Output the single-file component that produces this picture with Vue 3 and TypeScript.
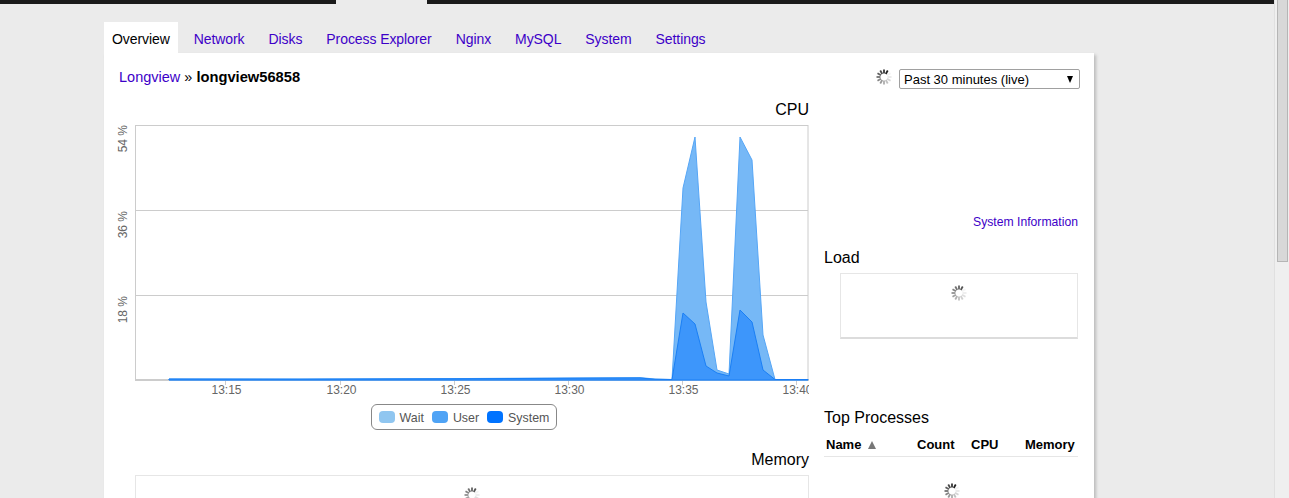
<script setup lang="ts">
const tabs = ['Overview', 'Network', 'Disks', 'Process Explorer', 'Nginx', 'MySQL', 'System', 'Settings'];

const ticks = [
  { x: 225, label: '13:15' },
  { x: 340, label: '13:20' },
  { x: 454, label: '13:25' },
  { x: 568, label: '13:30' },
  { x: 682, label: '13:35' },
  { x: 796, label: '13:40' },
];

const yLabels = [
  { y: 125, label: '54 %' },
  { y: 211, label: '36 %' },
  { y: 296, label: '18 %' },
];

const waitArea =
  '169,379 300,379 450,378.6 640,377.6 655,379 672,379.5 683,188 695,137 706,302 717,370 729,374 740,137 752,160 763,335 775,379.5 808,379.5 808,380 169,380';
const userArea =
  '169,379 300,379.2 450,378.8 640,378 655,379.3 672,379.5 683,313 695,324 706,366 717,373 729,376 740,310 752,322 763,370 775,379.5 808,379.5 808,380 169,380';

const legend = [
  { name: 'Wait', color: '#90c6f0' },
  { name: 'User', color: '#4fa3f5' },
  { name: 'System', color: '#0073ff' },
];

// twelve spokes, darkest at the top right, fading anticlockwise round to the right
const spokes = Array.from({ length: 12 }, (_, i) => ({
  angle: 30 - i * 30,
  opacity: Math.max(0.06, 1 - i * 0.09),
}));
</script>

<template>
  <div class="page">
    <div class="main">
      <div class="topbar">
        <div class="bar-left"></div>
        <div class="bar-gap"></div>
        <div class="bar-right"></div>
      </div>

      <div class="content">
        <nav class="tabs">
          <a v-for="(tab, i) in tabs" :key="tab" class="tab" :class="{ active: i === 0 }">{{ tab }}</a>
        </nav>

        <div class="panel">
          <div class="header">
            <div class="crumb"><a class="link">Longview</a> » <b>longview56858</b></div>
            <div class="controls">
              <svg class="spinner" viewBox="-8 -8 16 16">
                <line v-for="s in spokes" :key="s.angle" x1="0" y1="-3.5" x2="0" y2="-7.5" stroke="#222" stroke-width="1.8" :opacity="s.opacity" :transform="`rotate(${s.angle})`" />
              </svg>
              <div class="select">
                <span>Past 30 minutes (live)</span>
                <span class="caret"></span>
              </div>
            </div>
          </div>

          <div class="columns">
            <div class="left">
              <h3 class="title right-title">CPU</h3>
              <svg class="chart" viewBox="113 119 696 285">
                <rect x="135.5" y="125.5" width="672.5" height="254" fill="#fff" stroke="#ccc" />
                <line x1="136" y1="210.5" x2="808" y2="210.5" stroke="#ccc" />
                <line x1="136" y1="295.5" x2="808" y2="295.5" stroke="#ccc" />
                <line x1="135" y1="380" x2="809" y2="380" stroke="#ccc" stroke-width="2" />
                <polygon :points="waitArea" fill="#76b8f6" stroke="#56a6f6" stroke-width="1" />
                <polygon :points="userArea" fill="#3d96fb" stroke="#1a7ff5" stroke-width="1" />
                <g v-for="t in ticks" :key="t.x">
                  <line :x1="t.x + 0.5" y1="381" :x2="t.x + 0.5" y2="385" stroke="#ccc" />
                  <text :x="t.x + 1.5" y="394" text-anchor="middle" class="axis">{{ t.label }}</text>
                </g>
                <text v-for="l in yLabels" :key="l.y" class="axis" text-anchor="end" :transform="`translate(127 ${l.y}) rotate(-90)`">{{ l.label }}</text>
              </svg>
              <div class="legend-wrap">
                <div class="legend">
                  <div v-for="item in legend" :key="item.name" class="legend-item">
                    <span class="swatch" :style="{ background: item.color }"></span>
                    <span class="legend-name">{{ item.name }}</span>
                  </div>
                </div>
              </div>
              <h3 class="title right-title memory-title">Memory</h3>
              <div class="memory-box">
                <svg class="spinner" viewBox="-8 -8 16 16">
                  <line v-for="s in spokes" :key="s.angle" x1="0" y1="-3.5" x2="0" y2="-7.5" stroke="#555" stroke-width="1.8" :opacity="s.opacity" :transform="`rotate(${s.angle})`" />
                </svg>
              </div>
            </div>

            <div class="right">
              <a class="link sys-info">System Information</a>
              <h3 class="title load-title">Load</h3>
              <div class="load-box">
                <svg class="spinner" viewBox="-8 -8 16 16">
                  <line v-for="s in spokes" :key="s.angle" x1="0" y1="-3.5" x2="0" y2="-7.5" stroke="#555" stroke-width="1.8" :opacity="s.opacity" :transform="`rotate(${s.angle})`" />
                </svg>
              </div>
              <h3 class="title top-title">Top Processes</h3>
              <div class="proc-head">
                <span class="col-name">Name <i class="sort"></i></span>
                <span class="col-count">Count</span>
                <span class="col-cpu">CPU</span>
                <span class="col-mem">Memory</span>
              </div>
              <div class="proc-body">
                <svg class="spinner" viewBox="-8 -8 16 16">
                  <line v-for="s in spokes" :key="s.angle" x1="0" y1="-3.5" x2="0" y2="-7.5" stroke="#222" stroke-width="1.8" :opacity="s.opacity" :transform="`rotate(${s.angle})`" />
                </svg>
              </div>
            </div>
          </div>
        </div>
      </div>
    </div>

    <div class="scrollbar"><div class="thumb"></div></div>
  </div>
</template>

<style scoped>
.page {
  display: flex;
  height: 498px;
  overflow: hidden;
  font-family: "Liberation Sans", Arial, sans-serif;
  color: #000;
}

.main {
  flex: 1;
  min-width: 0;
}

.topbar {
  display: flex;
  height: 4px;
}

.bar-left {
  width: 336px;
  background: #1a1a1a;
}

.bar-gap {
  width: 91px;
}

.bar-right {
  flex: 1;
  background: #1a1a1a;
}

.content {
  padding: 18px 0 0 104px;
}

.tabs {
  display: flex;
  height: 31px;
}

.tab {
  padding: 0 8px;
  margin-right: 8px;
  font-size: 14px;
  letter-spacing: -0.08px;
  line-height: 34px;
  color: #3d00c8;
}

.tab.active {
  background: #fff;
  color: #000;
}

.panel {
  box-sizing: border-box;
  width: 990px;
  height: 500px;
  padding: 16px 15px 0 15px;
  background: #fff;
  box-shadow: 2px 2px 3px #bbb;
}

.header {
  display: flex;
  justify-content: space-between;
  align-items: center;
  height: 20px;
}

.crumb {
  margin-bottom: 4px;
  font-size: 14.5px;
}

.crumb b {
  font-size: 14.7px;
}

.link {
  color: #3d00c8;
}

.controls {
  display: flex;
  align-items: center;
  margin-right: -1px;
}

.spinner {
  display: block;
  width: 16px;
  height: 16px;
}

.controls .spinner {
  margin: -5px 7px 0 0;
}

.select {
  display: flex;
  justify-content: space-between;
  align-items: center;
  box-sizing: border-box;
  width: 181px;
  height: 20px;
  padding: 0 6px 0 4px;
  border: 1px solid #a0a0a0;
  border-radius: 2px;
  font-size: 13px;
}

.caret {
  width: 0;
  height: 0;
  border-left: 3.5px solid transparent;
  border-right: 3.5px solid transparent;
  border-top: 7px solid #000;
}

.columns {
  display: flex;
  gap: 15px;
  margin-top: 10px;
}

.left {
  width: 690px;
}

.right {
  width: 256px;
}

.title {
  margin: 0 0 -1px;
  padding-top: 1px;
  font-size: 16px;
  font-weight: normal;
  line-height: 20px;
}

.right-title {
  text-align: right;
}

.chart {
  display: block;
  width: 696px;
  height: 285px;
  margin-left: -6px;
}

.axis {
  font-size: 12px;
  fill: #666;
  font-family: "Liberation Sans", Arial, sans-serif;
}

.legend-wrap {
  display: flex;
  justify-content: center;
}

.legend {
  display: flex;
  gap: 8px;
  box-sizing: border-box;
  height: 26px;
  padding: 0 7px;
  align-items: center;
  border: 1px solid #888;
  border-radius: 6px;
  font-size: 12.4px;
  color: #555;
}

.legend-item {
  display: flex;
  align-items: center;
  gap: 5px;
}

.legend-name {
  padding-top: 2px;
}

.swatch {
  width: 16px;
  height: 12px;
  border-radius: 4px;
}

.memory-title {
  margin-top: 19px;
}

.memory-box {
  box-sizing: border-box;
  height: 100px;
  margin: 6px 0 0 16px;
  padding-top: 11px;
  border: 1px solid #e6e6e6;
  display: flex;
  justify-content: center;
}

.sys-info {
  display: block;
  margin-top: 116px;
  font-size: 12.2px;
  line-height: 14px;
  text-align: right;
  padding-right: 1px;
}

.load-title {
  margin-top: 18px;
}

.load-box {
  box-sizing: border-box;
  display: flex;
  justify-content: center;
  height: 66px;
  margin: 6px 1px 0 16px;
  padding-top: 11px;
  border: 1px solid #e6e6e6;
  border-bottom-width: 2px;
  border-bottom-color: #dcdcdc;
}

.top-title {
  margin-top: 68px;
}

.proc-head {
  display: flex;
  height: 25px;
  margin: 4px 1px 0 0;
  border-bottom: 1px solid #e6e6e6;
  font-size: 13px;
  font-weight: bold;
  line-height: 28px;
}

.col-name {
  box-sizing: border-box;
  width: 93px;
  padding-left: 2px;
}

.col-count,
.col-cpu {
  width: 54px;
}

.col-mem {
  flex: 1;
}

.sort {
  display: inline-block;
  width: 0;
  height: 0;
  margin-left: 3px;
  border-left: 4.5px solid transparent;
  border-right: 4.5px solid transparent;
  border-bottom: 8px solid #777;
}

.proc-body {
  display: flex;
  justify-content: center;
  padding-top: 26px;
}

.scrollbar {
  box-sizing: border-box;
  width: 15px;
  padding-left: 2px;
  background: #efefef;
  border-left: 1px solid #e0e0e0;
}

.thumb {
  box-sizing: border-box;
  width: 11px;
  height: 262px;
  background: #d8d8d8;
  border: 1px solid #b5b5b5;
  border-top: 0;
}
</style>

<style>
html,
body {
  margin: 0;
  height: 498px;
  overflow: hidden;
  background: #ebebeb;
}
</style>
